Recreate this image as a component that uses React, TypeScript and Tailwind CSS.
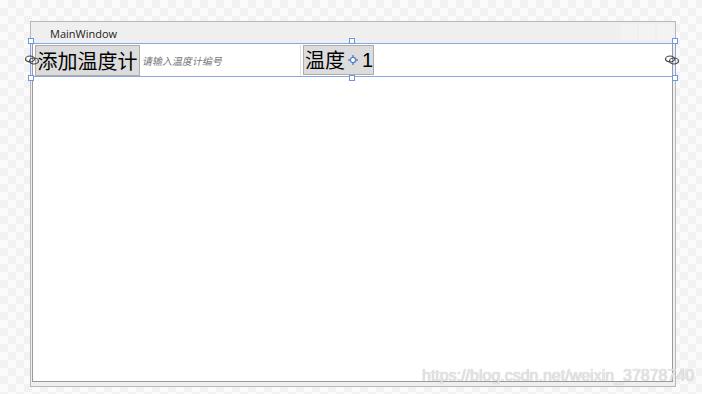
import React from "react";

const Handle = ({ className }: { className: string }) => (
  <div className={`absolute w-[6px] h-[6px] bg-white border border-[#6f96e0] ${className}`} />
);

const Link = ({ className }: { className: string }) => (
  <svg className={`absolute ${className}`} width="16" height="12" viewBox="0 0 16 12">
    <ellipse cx="6" cy="5" rx="4.5" ry="3" fill="none" stroke="#444" strokeWidth="1.2" />
    <ellipse cx="10" cy="7" rx="4.5" ry="3" fill="none" stroke="#444" strokeWidth="1.2" />
  </svg>
);

export default function App() {
  return (
    <div
      className="relative w-[702px] h-[394px] overflow-hidden bg-[#f9f9f9] bg-[repeating-conic-gradient(#f2f2f2_0%_25%,#fbfbfb_0%_50%)] bg-[length:16px_16px] pt-[21px] pl-[30px]"
      style={{ fontFamily: "'Noto Sans CJK SC', sans-serif" }}
    >
      {/* window */}
      <div className="w-[646px] h-[366px] border border-[#b8b8b8] bg-[#efefef] flex flex-col">
        <div className="h-[21px] flex items-center justify-between pl-[19px] pr-[2px] pt-[3px]">
          <span className="text-[11px] text-[#222]" style={{ fontFamily: "'Open Sans', 'Liberation Sans', sans-serif" }}>
            MainWindow
          </span>
          <div className="flex gap-[2px] self-start -mt-[1px]">
            <div className="w-[16px] h-[16px] bg-[#f3f3f3]" />
            <div className="w-[16px] h-[16px] bg-[#f3f3f3]" />
            <div className="w-[16px] h-[16px] bg-[#f3f3f3]" />
          </div>
        </div>
        <div className="ml-[1px] mr-[2px] mb-[4px] flex-1 border border-[#9a9a9a] bg-white">
          <div className="flex items-stretch h-[31px] mt-[1px] ml-[2px]">
            <div className="shrink-0 w-[105px] h-[31px] bg-[#dcdcdc] border border-[#adadad] flex items-center justify-center text-[20px] leading-none text-black whitespace-nowrap">
              添加温度计
            </div>
            <div className="shrink-0 w-[161px] h-[31px] flex items-center pl-[3px] text-[10px] text-[#7a7a7a] border-r border-[#e0e0e0] whitespace-nowrap">
              <span className="inline-block -skew-x-12">请输入温度计编号</span>
            </div>
            <div className="shrink-0 ml-[2px] w-[71px] h-[30px] bg-[#dcdcdc] border border-[#adadad] flex items-center pl-[1px] text-[20px] leading-none text-black whitespace-nowrap">
              <span>温度</span>
              <svg width="14" height="14" viewBox="0 0 14 14" className="shrink-0 ml-[1px]">
                <line x1="7" y1="2" x2="7" y2="12" stroke="#555" strokeWidth="1" />
                <line x1="2" y1="7" x2="12" y2="7" stroke="#555" strokeWidth="1" />
                <circle cx="7" cy="7" r="2.6" fill="white" stroke="#4a80e0" strokeWidth="1.3" />
              </svg>
              <span className="ml-[2px]" style={{ fontFamily: "'Liberation Sans', sans-serif" }}>1</span>
            </div>
          </div>
        </div>
      </div>

      {/* selection overlay */}
      <div className="absolute left-[30px] top-[43px] w-[646px] h-[34px] border border-[#87a7e6] pointer-events-none" />
      <Handle className="left-[28px] top-[38px]" />
      <Handle className="left-[349px] top-[38px]" />
      <Handle className="left-[672px] top-[38px]" />
      <Handle className="left-[28px] top-[75px]" />
      <Handle className="left-[349px] top-[75px]" />
      <Handle className="left-[672px] top-[75px]" />
      <Link className="left-[24px] top-[54px]" />
      <Link className="left-[664px] top-[54px]" />

      {/* watermark */}
      <div
        className="absolute left-[422px] top-[364px] text-[16px] text-[#e6e6e6] whitespace-nowrap"
        style={{ fontFamily: "'Liberation Sans', Arial, sans-serif", textShadow: "0 0 1px #b0b0b0" }}
      >
        https://blog.csdn.net/weixin_37878740
      </div>
    </div>
  );
}
